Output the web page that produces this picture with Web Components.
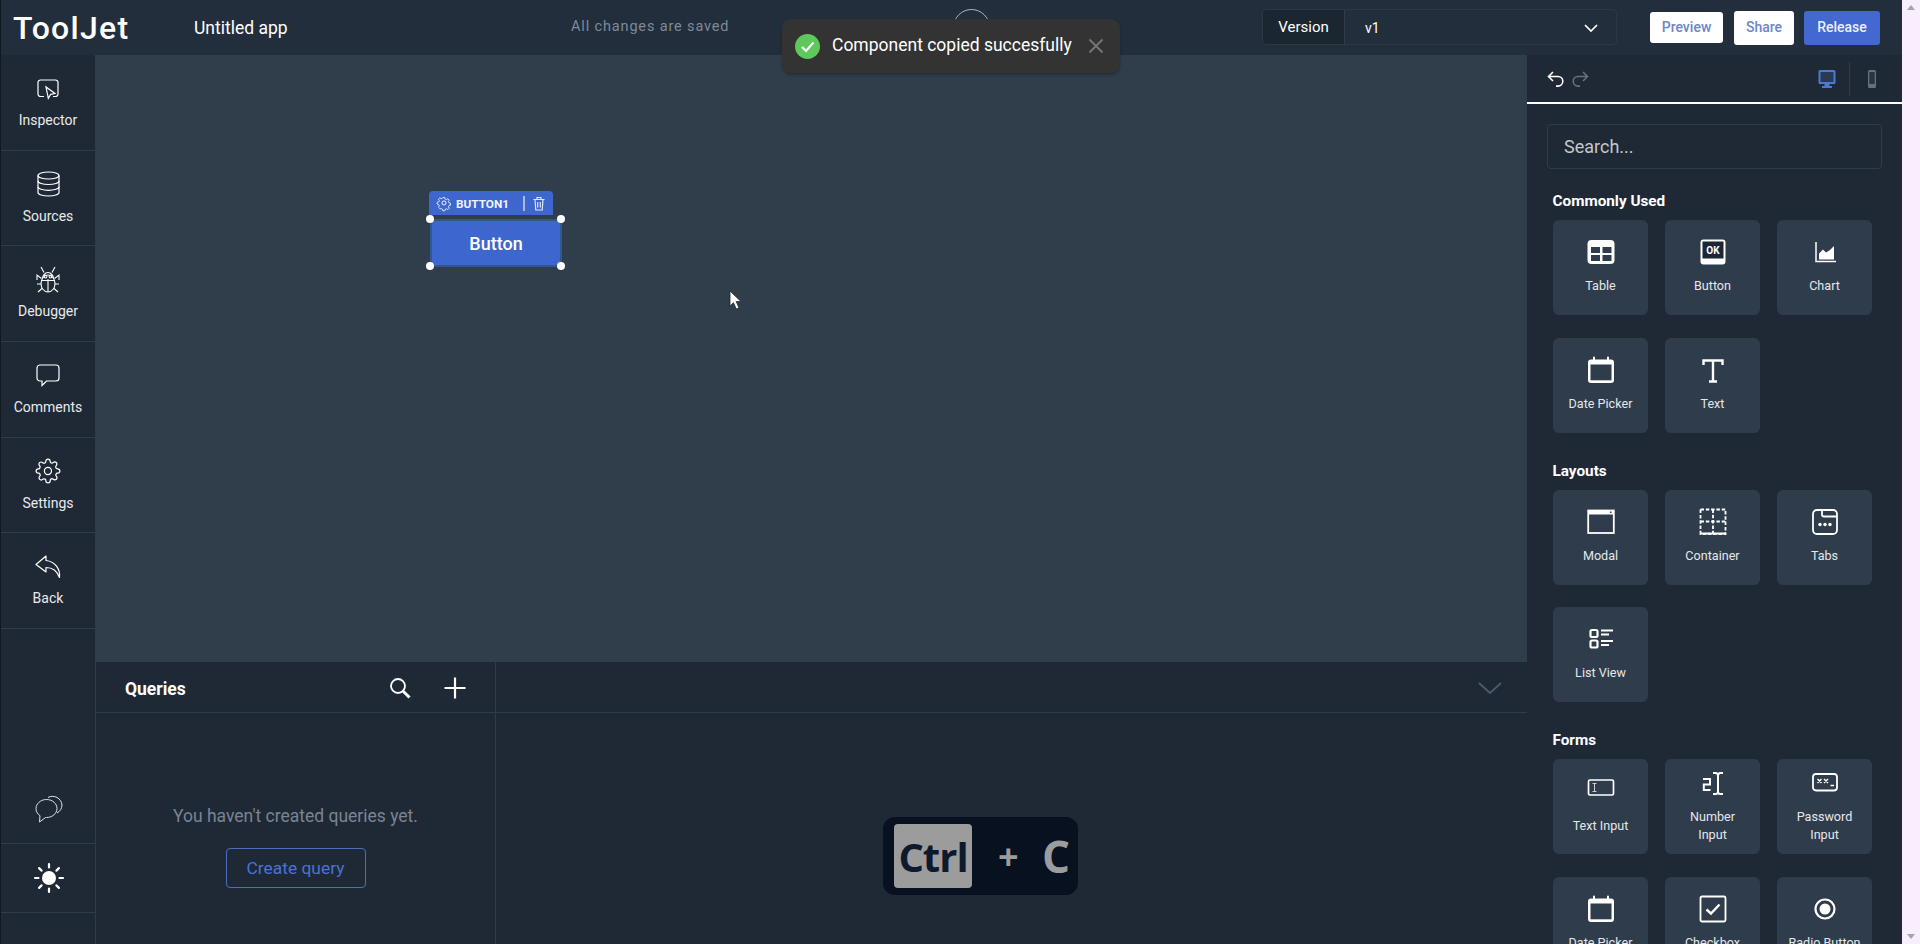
<!DOCTYPE html>
<html lang="en">
<head>
<meta charset="utf-8">
<title>ToolJet</title>
<style>
html,body{margin:0;padding:0;height:100%;overflow:hidden;background:#f8eefc;font-family:Roboto,"Liberation Sans",sans-serif}
</style>
<script>
const S='fill="none" stroke="#fff"';
const D='#2f3c4c';
const ICONS={
inspector:[22,20,`<g ${S} stroke-width="1.2"><path d="M7 17.5H3.5A2.5 2.5 0 0 1 1 15V3.5A2.5 2.5 0 0 1 3.5 1h15A2.5 2.5 0 0 1 21 3.5V15a2.5 2.5 0 0 1-2.5 2.5H16"/><path d="M9 8l2.3 11.3 2.4-4 4.3-.8z" fill="#1f2936"/></g>`],
database:[23,26,`<g ${S} stroke-width="1.2"><ellipse cx="11.5" cy="4.5" rx="10.5" ry="3.5"/><path d="M1 4.500v17c0 2 4.700 3.500 10.500 3.500S22 23.500 22 21.500v-17"/><path d="M1 10c0 2 4.700 3.500 10.500 3.500S22 12 22 10"/><path d="M1 15.800c0 2 4.700 3.500 10.500 3.500S22 17.800 22 15.800"/></g>`],
bug:[24,27,`<g ${S} stroke-width="1.1"><ellipse cx="12" cy="17.500" rx="7" ry="8.500"/><path d="M12 13v13M5.500 14.500h13"/><path d="M6.500 12.500a5.500 6 0 0 1 11 0"/><circle cx="9.500" cy="10.500" r="1.400"/><circle cx="14.500" cy="10.500" r="1.400"/><path d="M8 6.500L5 1M16 6.500L19 1M5.500 12.500L1 9v5M18.500 12.500L23 9v5M5 18H1M19 18h4M6 22.500l-4 3.500M18 22.500l4 3.500"/></g>`],
comment:[24,23,`<path ${S} stroke-width="1.2" d="M4 1h16a3 3 0 0 1 3 3v10a3 3 0 0 1-3 3h-9.500L6 21.500V17H4a3 3 0 0 1-3-3V4a3 3 0 0 1 3-3z"/>`],
gear:[26,26,`<g ${S} stroke-width="1.15" transform="scale(1.08)"><path d="M12 15.300a3.300 3.300 0 1 0 0-6.600 3.300 3.300 0 0 0 0 6.600z"/><path d="M19.400 15a1.650 1.650 0 0 0 .33 1.820l.06.06a2 2 0 0 1 0 2.830 2 2 0 0 1-2.830 0l-.06-.06a1.650 1.650 0 0 0-1.820-.33 1.650 1.650 0 0 0-1 1.510V21a2 2 0 0 1-2 2 2 2 0 0 1-2-2v-.09A1.650 1.650 0 0 0 9 19.400a1.650 1.650 0 0 0-1.820.33l-.06.06a2 2 0 0 1-2.830 0 2 2 0 0 1 0-2.830l.06-.06a1.650 1.650 0 0 0 .33-1.820 1.650 1.650 0 0 0-1.510-1H3a2 2 0 0 1-2-2 2 2 0 0 1 2-2h.09A1.650 1.650 0 0 0 4.600 9a1.650 1.650 0 0 0-.33-1.820l-.06-.06a2 2 0 0 1 0-2.830 2 2 0 0 1 2.830 0l.06.06a1.650 1.650 0 0 0 1.820.33H9a1.650 1.650 0 0 0 1-1.510V3a2 2 0 0 1 2-2 2 2 0 0 1 2 2v.09a1.650 1.650 0 0 0 1 1.510 1.650 1.650 0 0 0 1.820-.33l.06-.06a2 2 0 0 1 2.830 0 2 2 0 0 1 0 2.830l-.06.06a1.650 1.650 0 0 0-.33 1.820V9a1.650 1.650 0 0 0 1.510 1H21a2 2 0 0 1 2 2 2 2 0 0 1-2 2h-.09a1.650 1.650 0 0 0-1.510 1z"/></g>`],
back:[26,24,`<path ${S} stroke-width="1.2" stroke-linejoin="round" d="M11 1L1 9.500l10 7.500v-4.500c6 0 11 3 13.500 10 1-8-4-16-13.500-17z"/>`],
bubbles:[28,30,`<g fill="none" stroke="#dfe3e8" stroke-width="1"><path d="M13 4.500A9.500 9.500 0 0 1 27 12a9.500 9.500 0 0 1-5 8"/><path d="M11.500 6.500C5.800 6.500 1 10.700 1 15.500c0 3 1.600 5.600 4 7.200L4.500 29l6-4.500h1c5.800 0 10.500-4 10.500-9s-4.700-9-10.500-9z"/></g>`],
sun:[32,32,`<circle cx="16" cy="16" r="7" fill="#fff"/><g stroke="#fff" stroke-width="2.200" stroke-linecap="round"><path d="M16 2v3.500M16 26.500V30M2 16h3.500M26.500 16H30M6.100 6.100l2.500 2.500M23.400 23.400l2.500 2.500M6.100 25.900l2.500-2.500M23.400 8.600l2.500-2.500"/></g>`],
search:[22,22,`<g ${S}><circle cx="9" cy="9" r="7" stroke-width="1.800"/><path d="M14.200 14.200L20.500 20.500" stroke-width="3"/></g>`],
plus:[22,22,`<path ${S} stroke-width="2.200" d="M11 .500v21M.500 11h21"/>`],
chevBig:[24,12,`<path fill="none" stroke="#4d5a6b" stroke-width="1.800" d="M1 1l11 10L23 1"/>`],
chevSmall:[14,8,`<path ${S} stroke-width="1.700" d="M1 1l6 6 6-6"/>`],
undo:[18,18,`<path ${S} stroke-width="1.600" d="M6 2L1.500 6.500 6 11M1.500 6.500H11a4.800 4.800 0 0 1 0 9.600H9"/>`],
redo:[18,18,`<path fill="none" stroke="#66717f" stroke-width="1.600" d="M12 2l4.500 4.500L12 11M16.500 6.500H7a4.800 4.800 0 0 0 0 9.600h2"/>`],
desktop:[18,20,`<path fill="#4a7bd0" d="M2 1h14a1.500 1.500 0 0 1 1.500 1.500v11A1.500 1.500 0 0 1 16 15h-4.500v2H14v2H4v-2h2.500v-2H2A1.500 1.500 0 0 1 .5 13.500v-11A1.500 1.500 0 0 1 2 1z"/><rect x="2.500" y="3" width="13" height="10" fill="#2a3a52"/>`],
mobile:[10,20,`<rect x="1" y="1" width="8" height="18" rx="1.500" fill="#66717f"/><rect x="2.300" y="3" width="5.400" height="12" fill="#2a3543"/>`],
check:[25,25,`<circle cx="12.500" cy="12.500" r="12.500" fill="#5ec95a"/><path ${S} stroke-width="2.200" d="M7 13l4 4 7.500-8.500"/>`],
close:[16,16,`<path fill="none" stroke="#777" stroke-width="1.800" d="M1.500 1.500l13 13M14.500 1.500l-13 13"/>`],
gearSmall:[14,14,`<g ${S} stroke-width="1.600" transform="scale(.58)"><circle cx="12" cy="12" r="3.500"/><path d="M10 1.500h4l.7 3 2.600 1.100 2.700-1.700 2.800 2.800-1.700 2.700 1.100 2.600 3 .7v4l-3 .7-1.100 2.600 1.700 2.700-2.800 2.800-2.700-1.700-2.600 1.100-.7 3h-4l-.7-3-2.600-1.100L4 23.500l-2.800-2.800 1.700-2.700-1.100-2.600-3-.7v-4l3-.7L2.900 7.500 1.200 4.800 4 2l2.700 1.700L9.300 2.600z" transform="translate(1.500 1.500) scale(.86)"/></g>`],
trash:[12,15,`<path fill="none" stroke="#dfe6f5" stroke-width="1.200" d="M.5 3.500h11M4 3.500V1.500h4v2M2 3.500l.8 10.500h6.400L10 3.500M4.700 6v5.500M7.300 6v5.500"/>`],
cursor:[13,20,`<path fill="#fff" stroke="#1d2733" stroke-width=".8" d="M1 1v15l3.500-3.300L7.300 19l2.700-1.200-2.800-6.200H12z"/>`],
table:[28,28,`<rect x=".5" y="2" width="27" height="24" rx="4" fill="#fff"/><g fill="${D}"><rect x="4" y="9" width="9" height="6"/><rect x="15.500" y="9" width="9" height="6"/><rect x="4" y="17" width="9" height="6"/><rect x="15.500" y="17" width="9" height="6"/></g>`],
okbtn:[28,28,`<rect x="1.500" y="1.500" width="25" height="25" rx="3" fill="#fff"/><rect x="3.500" y="3.500" width="21" height="17" fill="#1d2734"/><text x="14" y="15.500" text-anchor="middle" font-family="Roboto,sans-serif" font-weight="700" font-size="10" fill="#fff">OK</text>`],
chart:[28,28,`<path ${S} stroke-width="1.500" d="M5 4v19.500h20"/><path fill="#fff" d="M8 21.500v-6l4-4 3 3 4-2.500 4-4V21.500z"/>`],
calendar:[28,28,`<path fill="#fff" d="M4 3.500h2V1.500a1 1 0 0 1 2 0v2h12V1.500a1 1 0 0 1 2 0v2h2a3 3 0 0 1 3 3V24a3 3 0 0 1-3 3H4a3 3 0 0 1-3-3V6.500a3 3 0 0 1 3-3z"/><rect x="3.500" y="8.500" width="21" height="15.800" fill="${D}"/>`],
textT:[28,28,`<path ${S} stroke-width="2.400" d="M4.500 9V4.500h19V9M14 4.500V25M10 25.500h8"/>`],
modal:[28,28,`<rect x="1.200" y="2.500" width="25.600" height="22.500" fill="none" stroke="#fff" stroke-width="1.800"/><rect x="1" y="2" width="26" height="4.500" fill="#fff"/><rect x="23" y="3.500" width="1.500" height="1.500" fill="${D}"/>`],
container:[28,28,`<g fill="none" stroke="#fff" stroke-width="1.800" stroke-dasharray="3.500 1.800"><rect x="1.500" y="1.500" width="25" height="24.500"/><path d="M14 1.500V26M1.500 13.500h25"/></g><path d="M1 25.500h26" stroke="#fff" stroke-width="2"/>`],
tabs:[28,28,`<g fill="none" stroke="#fff" stroke-width="1.800"><rect x="2" y="2" width="24" height="24" rx="4"/><path d="M11 2v4.500a2 2 0 0 0 2 2h13"/></g><g fill="#fff"><circle cx="9" cy="16.500" r="1.700"/><circle cx="14" cy="16.500" r="1.700"/><circle cx="19" cy="16.500" r="1.700"/></g>`],
list:[28,28,`<g fill="none" stroke="#fff" stroke-width="2.200"><rect x="3.500" y="5" width="7" height="7" rx="1.500"/><rect x="3.500" y="15.500" width="7" height="7" rx="1.500"/></g><g stroke="#fff" stroke-width="1.800"><path d="M14 5.500h12M14 9.500h8M14 16h12M14 20h8"/></g>`],
textinput:[28,28,`<rect x="1.500" y="7" width="25" height="15" rx="1.500" fill="none" stroke="#fff" stroke-width="1.700"/><path fill="none" stroke="#ccc" stroke-width="1" d="M5.500 10.500h4M5.500 18.500h4M7.500 10.500v8"/>`],
number:[28,28,`<path fill="none" stroke="#fff" stroke-width="2" d="M4 10h7v5.500H4.800V21H11.500"/><path fill="none" stroke="#fff" stroke-width="2" d="M14 4h2.500a2.500 2.500 0 0 1 2.500 2.500v16a2.500 2.500 0 0 1-2.500 2.500H14M24 4h-2.500A2.500 2.500 0 0 0 19 6.500M19 22.500a2.500 2.500 0 0 0 2.500 2.500H24"/>`],
password:[28,28,`<rect x="2" y="5" width="24" height="16.500" rx="3" fill="none" stroke="#fff" stroke-width="1.800"/><g stroke="#fff" stroke-width="1.400"><path d="M6.500 10l4 4M10.500 10l-4 4M13 10l4 4M17 10l-4 4"/><path d="M19.500 16.500h3.500" stroke-width="1.600"/></g>`],
checkbox:[28,28,`<rect x="1.500" y="1.500" width="25" height="25" rx="1.500" fill="none" stroke="#fff" stroke-width="1.800"/><path ${S} stroke-width="2.400" d="M7.500 14.500l4.500 4 8.500-9"/>`],
radio:[28,28,`<circle cx="14" cy="14" r="9.500" fill="none" stroke="#fff" stroke-width="2.200"/><circle cx="14" cy="14" r="5.500" fill="#fff"/>`]
};
customElements.define('tj-icon',class extends HTMLElement{
  constructor(){super();this.attachShadow({mode:'open'})}
  connectedCallback(){
    const [w,h,m]=ICONS[this.getAttribute('name')];
    this.shadowRoot.innerHTML=`<style>:host{display:block;width:${w}px;height:${h}px;line-height:0;flex:none}svg{display:block;overflow:visible}</style><svg xmlns="http://www.w3.org/2000/svg" width="${w}" height="${h}" viewBox="0 0 ${w} ${h}">${m}</svg>`;
  }
});
function def(name,css,html){
  customElements.define(name,class extends HTMLElement{
    constructor(){super();this.attachShadow({mode:'open'}).innerHTML=`<style>${css}</style>${html}`}
  });
}
const SLOT='<slot></slot>';
def('tj-app',`:host{display:flex;width:1920px;height:944px;position:relative;overflow:hidden;color:#fff;font-family:Roboto,"Liberation Sans",sans-serif}
.main{width:1902px;flex:none;display:flex;flex-direction:column;height:944px;border-left:1px solid #12181f;box-sizing:border-box}
.body{flex:1;display:flex;min-height:0}`,
`<div class="main"><slot name="top"></slot><div class="body"><slot></slot></div></div><slot name="scroll"></slot><slot name="over"></slot>`);
def('tj-scrollstrip',`:host{display:flex;flex-direction:column;justify-content:space-between;align-items:center;width:18px;height:944px;background:#f8eefc;padding:5px 0;box-sizing:border-box}
i{display:block;width:0;height:0;border-left:4px solid transparent;border-right:4px solid transparent}
.u{border-bottom:5px solid #a5a5a5}.d{border-top:5px solid #a5a5a5}`,`<i class="u"></i><i class="d"></i>`);
def('tj-topbar',`:host{display:flex;align-items:center;height:55px;background:#232e3c;flex:none;padding-left:12px;box-sizing:border-box}`,SLOT);
def('tj-logo',`:host{display:block;font:500 32px/1 Roboto,sans-serif;color:#fff;letter-spacing:1.300px;width:181px;margin-top:1px}`,SLOT);
def('tj-appname',`:host{display:block;font:400 17.500px/22px Roboto,sans-serif;color:#fff;width:377px}`,SLOT);
def('tj-saved',`:host{display:block;font:400 14.500px/20px Roboto,sans-serif;color:#7f8997;letter-spacing:.85px;width:382px;margin-top:-2px}`,SLOT);
def('tj-loader',`:host{display:block;width:37px;height:37px;box-sizing:border-box;border:1.500px solid #aab6c6;border-radius:50%;margin-top:-1px}`,'');
def('tj-version',`:host{display:flex;margin-left:272px;width:355px;height:36px;border:1px solid #2b3848;border-radius:4px;box-sizing:border-box;align-items:stretch;margin-top:-1px}
.l{width:81px;flex:none;background:#1c2631;border-right:1px solid #2f3c4c;display:flex;align-items:center;justify-content:center;font:400 15px Roboto,sans-serif;color:#fff;border-radius:4px 0 0 4px}
.v{flex:1;display:flex;align-items:center;justify-content:space-between;padding:2px 18px 0 20px;font:400 14px Roboto,sans-serif;color:#fff}`,
`<div class="l">Version</div><div class="v"><slot></slot><tj-icon name="chevSmall"></tj-icon></div>`);
def('tj-btn',`:host{display:flex;align-items:center;justify-content:center;box-sizing:border-box;height:var(--h,34px);width:var(--w,60px);background:var(--bg,#fff);color:var(--fg,#6c86c7);border-radius:3px;font:500 14px Roboto,sans-serif;margin-left:var(--ml,10px);flex:none;padding-bottom:2px}`,SLOT);
def('tj-sidebar',`:host{display:flex;flex-direction:column;width:94px;flex:none;background:#1f2936;border-right:1px solid #2f3c4c;box-sizing:content-box;padding-bottom:31px;height:858px}
.sp{flex:1}`,`<slot name="items"></slot><div class="sp"></div><slot name="foot"></slot>`);
def('tj-side-item',`:host{display:flex;flex-direction:column;align-items:center;height:95.700px;box-sizing:border-box;border-bottom:1px solid #2f3c4c;padding-top:var(--pt,20px);color:#e8eaec;font:400 14px/18px Roboto,sans-serif}
.i{height:27px;display:flex;align-items:center;justify-content:center;margin-bottom:9px}`,`<div class="i"><slot name="icon"></slot></div><slot></slot>`);
def('tj-side-foot',`:host{display:flex;align-items:center;justify-content:center;height:69px;box-sizing:border-box;border-bottom:1px solid #2f3c4c;padding:0 0 var(--pb,0) 2px}`,SLOT);
def('tj-center',`:host{display:flex;flex-direction:column;width:1431px;flex:none}`,SLOT);
def('tj-canvas',`:host{display:block;height:607px;background:#303d4b;position:relative;flex:none}`,SLOT);
def('tj-widget',`:host{position:absolute;left:333px;top:136px;width:134px;height:78px;display:block}
.h{position:absolute;left:0;top:0;width:124px;height:24px;background:#3e66cf;border-radius:4px 4px 0 0;display:flex;align-items:center;box-sizing:border-box;padding-left:8px;font:700 11.800px Roboto,sans-serif;color:#f2f5fc}
.h span{margin:1px 0 0 5px;width:67px}
.h b{width:1.500px;height:15px;background:#aab9dd;margin-right:8px}
.b{position:absolute;left:1px;top:28px;width:132px;height:48px;box-sizing:border-box;background:#3e66cf;border:2px solid #33568f;display:flex;align-items:center;justify-content:center;font:500 18px Roboto,sans-serif;color:#fff}
.d{position:absolute;width:8px;height:8px;border-radius:50%;background:#fff}`,
`<div class="h"><tj-icon name="gearSmall"></tj-icon><span><slot></slot></span><b></b><tj-icon name="trash"></tj-icon></div><div class="b">Button</div>
<i class="d" style="left:-3px;top:24px"></i><i class="d" style="left:128px;top:24px"></i><i class="d" style="left:-3px;top:71px"></i><i class="d" style="left:128px;top:71px"></i>`);
def('tj-queries',`:host{display:flex;flex:1;background:#1f2936;min-height:0}`,SLOT);
def('tj-qlist',`:host{display:flex;flex-direction:column;width:399px;flex:none;border-right:1px solid #2f3c4c;box-sizing:content-box}
.hd{display:flex;align-items:center;height:51px;box-sizing:border-box;border-bottom:1px solid #2f3c4c;padding-left:29px;font:700 17.500px Roboto,sans-serif;color:#fff}
.t{width:264px;margin-top:4px}.ic{display:flex;align-items:center;gap:33px;margin-top:1px}
.bd{flex:1;display:flex;flex-direction:column;align-items:center;padding-top:93px;color:#7b8492;font:400 17.500px/20px Roboto,sans-serif}`,
`<div class="hd"><div class="t">Queries</div><div class="ic"><tj-icon name="search"></tj-icon><tj-icon name="plus"></tj-icon></div></div><div class="bd"><slot></slot><tj-outline>Create query</tj-outline></div>`);
def('tj-outline',`:host{display:flex;align-items:center;justify-content:center;width:140px;height:40px;margin-top:22px;box-sizing:border-box;border:1px solid #4a6fb8;border-radius:4px;color:#4a72d6;font:400 17.400px Roboto,sans-serif}`,SLOT);
def('tj-qdetail',`:host{display:block;flex:1}.hd{height:51px;box-sizing:border-box;border-bottom:1px solid #2f3c4c;display:flex;justify-content:flex-end;align-items:center;padding-right:25px;padding-top:1px}`,
`<div class="hd"><tj-icon name="chevBig"></tj-icon></div>`);
def('tj-panel',`:host{display:flex;flex-direction:column;width:375px;flex:none;background:#1f2936;overflow:hidden;height:889px}
.top{flex:none;height:49px;border-bottom:2px solid #fff;display:flex;align-items:center;padding-left:20px;box-sizing:border-box}
.g{display:flex;gap:6px;flex:1}
.dev{display:flex;align-items:center;height:34px;margin-right:25px}
.dev i{display:block;width:1px;height:34px;background:#2f3c4c;margin:0 17px 0 13px}
.body{padding:18px 0 0 26px}`,
`<div class="top"><div class="g"><tj-icon name="undo"></tj-icon><tj-icon name="redo"></tj-icon></div><div class="dev"><tj-icon name="desktop"></tj-icon><i></i><tj-icon name="mobile"></tj-icon></div></div><div class="body"><slot></slot></div>`);
def('tj-search',`:host{display:flex;align-items:center;width:335px;height:45px;margin:2px 0 23px -6px;box-sizing:border-box;border:1px solid #2f3c4c;border-radius:4px;padding-left:16px;font:400 18px Roboto,sans-serif;color:#c3c7cc}`,SLOT);
def('tj-section',`:host{display:block;margin-bottom:29px}
h3{margin:0 0 10px 0;font:700 15.300px/18px Roboto,sans-serif;color:#fff;margin-left:-.5px}
.g{display:grid;grid-template-columns:95px 95px 95px;column-gap:17px;row-gap:22.600px}`,
`<h3><slot name="title"></slot></h3><div class="g"><slot></slot></div>`);
def('tj-card',`:host{display:flex;flex-direction:column;align-items:center;height:95px;box-sizing:border-box;background:#2f3c4c;border-radius:6px;padding-top:var(--top,18px);font:400 12.600px/18px Roboto,sans-serif;color:#e4e7ea;text-align:center;overflow:hidden}
.i{margin-bottom:var(--gap,11px);height:28px}`,`<div class="i"><slot name="icon"></slot></div><div><slot></slot></div>`);
def('tj-toast',`:host{position:absolute;left:782px;top:19px;width:338px;height:54px;box-sizing:border-box;background:#333;border-radius:9px;box-shadow:0 2px 3px rgba(0,0,0,.25);display:flex;align-items:center;padding:0 16px 0 13px;font:400 17.500px Roboto,sans-serif;color:#fff}
span{margin:-3px 0 0 12px;width:256px;white-space:nowrap}`,`<tj-icon name="check"></tj-icon><span><slot></slot></span><tj-icon name="close"></tj-icon>`);
def('tj-keys',`:host{position:absolute;left:883px;top:817px;width:195px;height:78px;box-sizing:border-box;background:#08111f;border-radius:12px;display:flex;align-items:center;padding-left:11px;font:700 44px "Open Sans",sans-serif;color:#9c9c9c}
.k{width:78px;height:64px;background:#9c9c9c;color:#0d1a2c;border-radius:4px;display:flex;align-items:center;justify-content:center;letter-spacing:-1px;font-size:40px}
.p{margin-left:26px;font-size:36px;width:36px}.c{margin-left:8px}`,`<div class="k">Ctrl</div><div class="p">+</div><div class="c">C</div>`);
def('tj-cursor',`:host{position:absolute;left:729px;top:290px;display:block}`,`<tj-icon name="cursor"></tj-icon>`);
</script>
</head>
<body>
<tj-app>
  <tj-topbar slot="top">
    <tj-logo>ToolJet</tj-logo>
    <tj-appname>Untitled app</tj-appname>
    <tj-saved>All changes are saved</tj-saved>
    <tj-loader></tj-loader>
    <tj-version>v1</tj-version>
    <tj-btn style="--w:73px;--h:31px;--ml:33px">Preview</tj-btn>
    <tj-btn style="--w:60px;--ml:11px">Share</tj-btn>
    <tj-btn style="--w:76px;--bg:#4368d0;--fg:#eef1fa">Release</tj-btn>
  </tj-topbar>
  <tj-sidebar>
    <tj-side-item slot="items"><tj-icon slot="icon" name="inspector"></tj-icon>Inspector</tj-side-item>
    <tj-side-item slot="items"><tj-icon slot="icon" name="database"></tj-icon>Sources</tj-side-item>
    <tj-side-item slot="items"><tj-icon slot="icon" name="bug"></tj-icon>Debugger</tj-side-item>
    <tj-side-item slot="items"><tj-icon slot="icon" name="comment"></tj-icon>Comments</tj-side-item>
    <tj-side-item slot="items"><tj-icon slot="icon" name="gear"></tj-icon>Settings</tj-side-item>
    <tj-side-item slot="items"><tj-icon slot="icon" name="back"></tj-icon>Back</tj-side-item>
    <tj-side-foot slot="foot" style="--pb:3px"><tj-icon name="bubbles"></tj-icon></tj-side-foot>
    <tj-side-foot slot="foot"><tj-icon name="sun"></tj-icon></tj-side-foot>
  </tj-sidebar>
  <tj-center>
    <tj-canvas><tj-widget>BUTTON1</tj-widget></tj-canvas>
    <tj-queries>
      <tj-qlist>You haven't created queries yet.</tj-qlist>
      <tj-qdetail></tj-qdetail>
    </tj-queries>
  </tj-center>
  <tj-panel>
    <tj-search>Search...</tj-search>
    <tj-section><span slot="title">Commonly Used</span>
      <tj-card><tj-icon slot="icon" name="table"></tj-icon>Table</tj-card>
      <tj-card><tj-icon slot="icon" name="okbtn"></tj-icon>Button</tj-card>
      <tj-card><tj-icon slot="icon" name="chart"></tj-icon>Chart</tj-card>
      <tj-card><tj-icon slot="icon" name="calendar"></tj-icon>Date Picker</tj-card>
      <tj-card><tj-icon slot="icon" name="textT"></tj-icon>Text</tj-card>
    </tj-section>
    <tj-section><span slot="title">Layouts</span>
      <tj-card><tj-icon slot="icon" name="modal"></tj-icon>Modal</tj-card>
      <tj-card><tj-icon slot="icon" name="container"></tj-icon>Container</tj-card>
      <tj-card><tj-icon slot="icon" name="tabs"></tj-icon>Tabs</tj-card>
      <tj-card><tj-icon slot="icon" name="list"></tj-icon>List View</tj-card>
    </tj-section>
    <tj-section><span slot="title">Forms</span>
      <tj-card style="--top:14px;--gap:16px"><tj-icon slot="icon" name="textinput"></tj-icon>Text Input</tj-card>
      <tj-card style="--top:10px"><tj-icon slot="icon" name="number"></tj-icon>Number<br>Input</tj-card>
      <tj-card style="--top:10px"><tj-icon slot="icon" name="password"></tj-icon>Password<br>Input</tj-card>
      <tj-card><tj-icon slot="icon" name="calendar"></tj-icon>Date Picker</tj-card>
      <tj-card><tj-icon slot="icon" name="checkbox"></tj-icon>Checkbox</tj-card>
      <tj-card><tj-icon slot="icon" name="radio"></tj-icon>Radio Button</tj-card>
    </tj-section>
  </tj-panel>
  <tj-scrollstrip slot="scroll"></tj-scrollstrip>
  <tj-toast slot="over">Component copied succesfully</tj-toast>
  <tj-keys slot="over"></tj-keys>
  <tj-cursor slot="over"></tj-cursor>
</tj-app>
</body>
</html>
